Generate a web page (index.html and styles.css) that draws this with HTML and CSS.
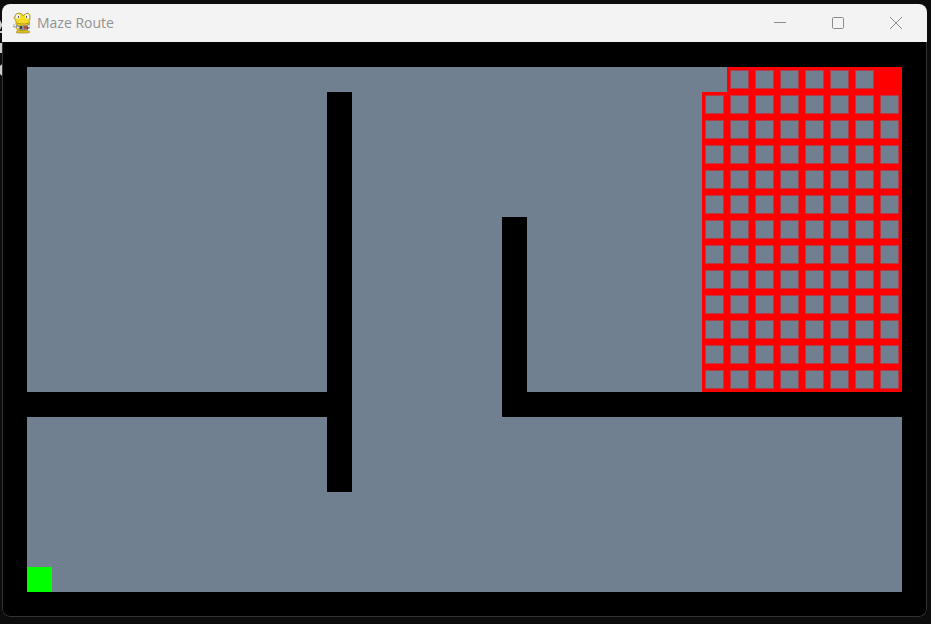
FILE: index.html
```html
<!DOCTYPE html>
<html lang="en">
<head>
<meta charset="utf-8">
<title>Maze Route</title>
<link rel="stylesheet" href="styles.css">
</head>
<body>
<svg class="backdrop" width="4" height="90" viewBox="0 0 4 90" aria-hidden="true">
  <path d="M0 20l2 4v2l-2 4zM0 31h2v2H0zM0 43h2v10H0zM2 64L0 66v8l2 2z" fill="#ccc"/>
</svg>
<main class="window">
  <header class="titlebar">
    <svg class="app-icon" width="20" height="22" viewBox="0 0 20 22" aria-hidden="true">
      <path d="M5 12h11v5l-1 3H6l-2-3z" fill="#e8c51c"/>
      <path d="M4 20l3-2 4 1 4-1 3 2-2 1H5z" fill="#e3c21d" stroke="#8f7d2a" stroke-width=".6"/>
      <path d="M4 2l3-1 3 1 1 2 2-2 3-1 2 2v4l-1 2 1 2-2 2-4 1H7l-3-2V9L2 6z" fill="#f5dc25" stroke="#94832f" stroke-width=".7"/>
      <path d="M4 3l2-1 2 1v3L6 7 4 6zM13 3l2-1 2 1v3l-2 1-2-1z" fill="#f4f4f4"/>
      <path d="M6 4h1v2H6zM14 4h1v2h-1z" fill="#555"/>
      <path d="M5 11l3 1h5l4-1" fill="none" stroke="#9a811b" stroke-width=".8"/>
      <path d="M1 12l3 1 4 1 7-1 3-1v4l-3 2H8l-3-2-4-1z" fill="#8c8c8c"/>
      <path d="M1 12l3 1v2l-3-1zM5 14l2 1v2l-2-1zM16 13h2v2h-2z" fill="#ddd"/>
      <path d="M8 14h2v3H8zM15 15h1v2h-1z" fill="#444"/>
      <path d="M12 14h3v3h-3z" fill="#a8504a"/>
    </svg>
    <h1 class="title">Maze Route</h1>
    <div class="controls">
      <button class="control" type="button" aria-label="Minimize">
        <svg width="12" height="12" viewBox="0 0 12 12"><path d="M0 5.5h12"/></svg>
      </button>
      <button class="control" type="button" aria-label="Maximize">
        <svg width="12" height="12" viewBox="0 0 12 12"><rect x=".5" y=".5" width="11" height="11" rx="1"/></svg>
      </button>
      <button class="control" type="button" aria-label="Close">
        <svg width="12" height="12" viewBox="0 0 12 12"><path d="M0 0l12 12M12 0L0 12"/></svg>
      </button>
    </div>
  </header>
  <svg class="maze" viewBox="0 0 925 575" role="img" aria-label="Maze with start, goal and explored cells">
    <defs>
      <pattern id="explored" width="25" height="25" patternUnits="userSpaceOnUse">
        <rect width="25" height="25" fill="#f00"/>
        <rect x="3" y="3" width="19" height="19" fill="#b53c44"/>
        <rect x="4" y="4" width="17" height="17" fill="#708090"/>
      </pattern>
    </defs>
    <rect width="925" height="575" fill="#000"/>
    <rect x="25" y="25" width="875" height="525" fill="#708090"/>
    <path d="M325 50h25v400h-25v-75H25v-25h300zM500 175h25v175h375v25H500z" fill="#000"/>
    <path d="M725 25h175v325H700V50h25z" fill="url(#explored)"/>
    <rect x="875" y="25" width="25" height="25" fill="#f00"/>
    <rect x="25" y="525" width="25" height="25" fill="#0f0"/>
  </svg>
</main>
</body>
</html>
```
FILE: styles.css
```css
* {
  box-sizing: border-box;
}

body {
  margin: 0;
  padding: 4px 4px 6px 2px;
  background: #0c0c0c;
  font-family: "Open Sans", "Noto Sans", sans-serif;
}

.backdrop {
  position: absolute;
  top: 0;
  left: 0;
}

.window {
  position: relative;
  overflow: hidden;
  border-radius: 8px;
  background: #000;
}

.window::after {
  content: "";
  position: absolute;
  inset: 38px 0 0;
  border: 1px solid #333;
  border-top: 0;
  border-radius: 0 0 8px 8px;
}

.titlebar {
  display: flex;
  align-items: center;
  height: 38px;
  padding: 0 2px 0 10px;
  background: #f3f3f3;
}

.title {
  flex: 1;
  margin: 0 0 0 5px;
  color: #929292;
  font-size: 14px;
  font-weight: 400;
  line-height: 20px;
}

.controls {
  display: flex;
  height: 100%;
}

.control {
  display: flex;
  align-items: center;
  justify-content: center;
  width: 58px;
  padding: 0;
  border: 0;
  background: transparent;
}

.control svg {
  fill: none;
  stroke: #8c8c8c;
}

.maze {
  display: block;
  width: 100%;
  height: auto;
}
```
